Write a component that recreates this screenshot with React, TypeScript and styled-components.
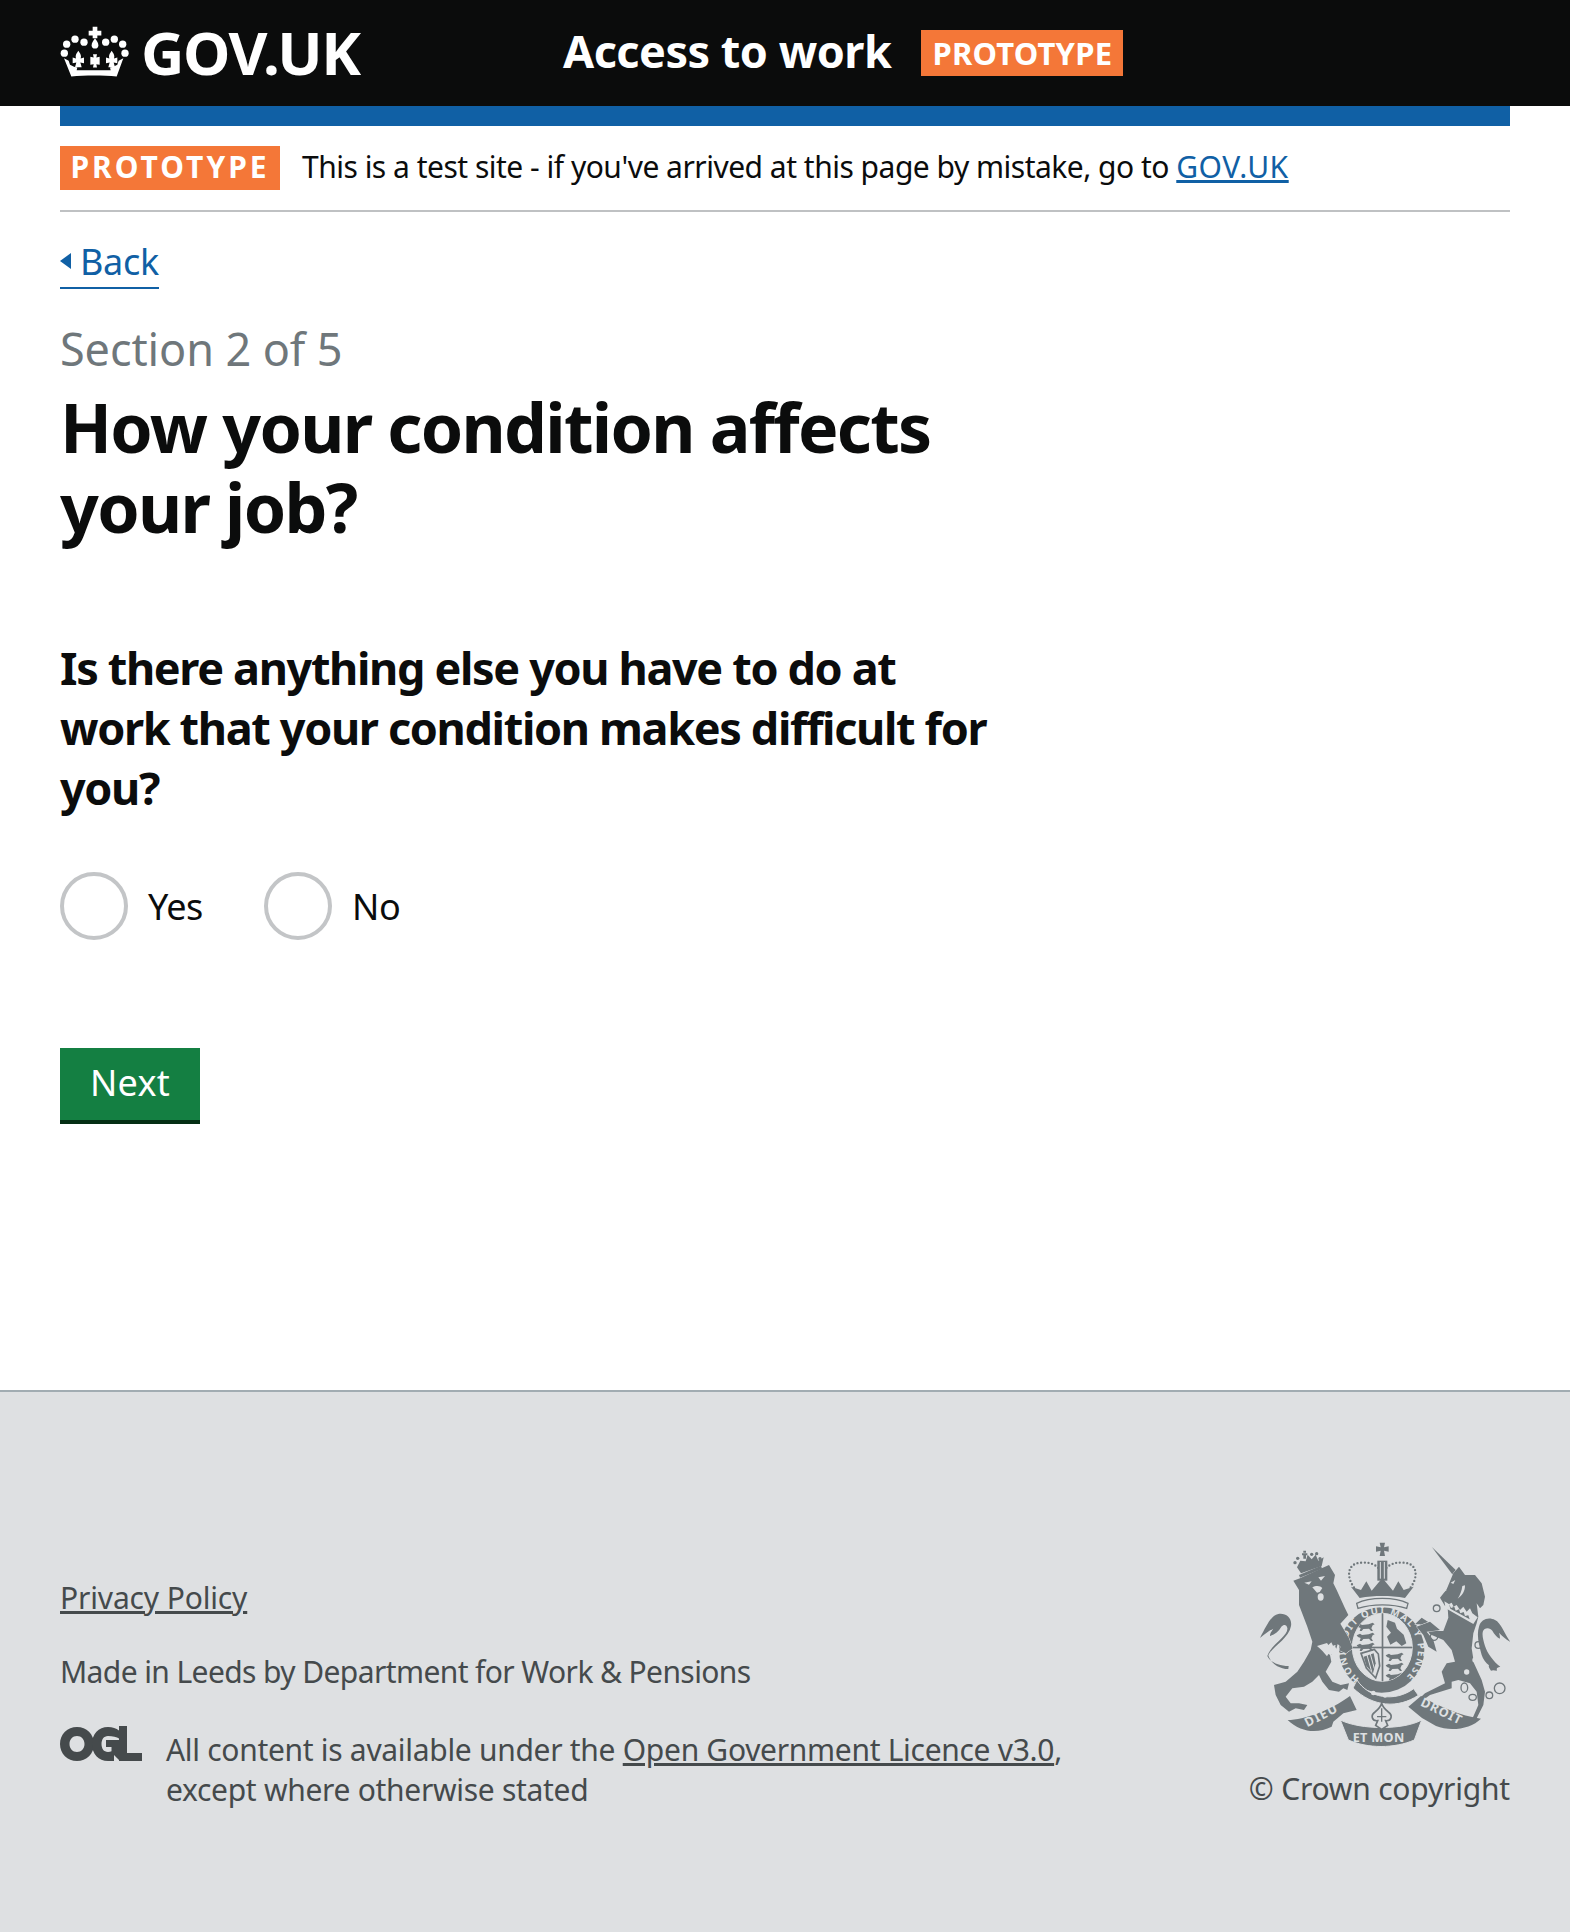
import { FC } from 'react'
import styled, { createGlobalStyle } from 'styled-components'

const GlobalStyle = createGlobalStyle`
  html, body {
    margin: 0;
    padding: 0;
    background: #fff;
    color: #0b0c0c;
    font-family: "Noto Sans", "Liberation Sans", sans-serif;
  }
`

const Page = styled.div`
  width: 1570px;
  height: 1932px;
  display: flex;
  flex-direction: column;
  overflow: hidden;
`

const Header = styled.header`
  height: 106px;
  flex: none;
  background: #0b0c0c;
  color: #fff;
  padding: 0 60px;
  display: flex;
  align-items: center;
  box-sizing: border-box;
`

const Logo = styled.div`
  width: 503px;
  display: flex;
  align-items: center;
  gap: 11px;
  font-size: 60px;
  font-weight: 700;
  line-height: 1;
  letter-spacing: -1.4px;
  padding-bottom: 2px;
`

const ServiceName = styled.div`
  font-size: 45px;
  font-weight: 700;
  letter-spacing: -0.5px;
  line-height: 1;
  padding-bottom: 6px;
`

const HeaderTag = styled.span`
  margin-left: 30px;
  background: #f47738;
  height: 46px;
  width: 202px;
  display: flex;
  align-items: center;
  justify-content: center;
  font-size: 31px;
  font-weight: 700;
  letter-spacing: 0.2px;
`

const Main = styled.main`
  flex: 1;
  padding: 0 60px;
`

const BlueBar = styled.div`
  height: 20px;
  background: #1060a5;
`

const PhaseBanner = styled.div`
  height: 86px;
  box-sizing: border-box;
  padding-top: 20px;
  border-bottom: 2px solid #bfc1c3;
  display: flex;
  align-items: flex-start;
  gap: 22px;
`

const PhaseTag = styled.span`
  width: 220px;
  height: 44px;
  background: #f47738;
  color: #fff;
  display: flex;
  align-items: center;
  justify-content: center;
  padding-bottom: 3px;
  box-sizing: border-box;
  font-size: 30px;
  font-weight: 700;
  letter-spacing: 3px;
`

const PhaseText = styled.span`
  font-size: 30px;
  line-height: 42px;
  letter-spacing: -0.5px;
`

const TextLink = styled.a`
  color: #1060a5;
  text-decoration: underline;
  letter-spacing: 0.5px;
`

const BackLink = styled.a`
  display: inline-flex;
  align-items: center;
  gap: 9px;
  margin-top: 28px;
  height: 49px;
  padding-bottom: 5px;
  box-sizing: border-box;
  color: #1060a5;
  font-size: 36px;
  letter-spacing: -0.3px;
  border-bottom: 2px solid #1060a5;
`

const BackArrow = styled.i`
  width: 0;
  height: 0;
  border-style: solid;
  border-width: 8px 11px 8px 0;
  border-color: transparent #1060a5 transparent transparent;
`

const Caption = styled.div`
  margin-top: 30px;
  color: #6f777b;
  font-size: 45px;
  line-height: 60px;
  letter-spacing: -0.1px;
`

const Title = styled.h1`
  margin: 8px 0 0;
  font-size: 68px;
  line-height: 80px;
  font-weight: 700;
  letter-spacing: -1.7px;
`

const Question = styled.h2`
  margin: 91px 0 0;
  font-size: 45px;
  line-height: 60px;
  font-weight: 700;
  letter-spacing: -1.35px;
`

const Options = styled.div`
  margin-top: 54px;
  display: flex;
  gap: 61px;
`

const Option = styled.label`
  display: flex;
  align-items: center;
  gap: 20px;
  font-size: 36px;
  letter-spacing: -0.4px;
`

const RadioCircle = styled.span`
  width: 68px;
  height: 68px;
  box-sizing: border-box;
  border: 4px solid #c3c5c7;
  border-radius: 50%;
  background: #fff;
`

const NextButton = styled.button`
  display: block;
  margin-top: 108px;
  width: 140px;
  height: 76px;
  padding: 0 0 4px;
  box-sizing: border-box;
  border: 0;
  border-bottom: 4px solid #052e14;
  background: #147f42;
  color: #fff;
  font-family: inherit;
  font-size: 36px;
  letter-spacing: 0.3px;
`

const Footer = styled.footer`
  height: 542px;
  flex: none;
  box-sizing: border-box;
  border-top: 2px solid #a1acb2;
  background: #dee0e2;
  color: #454a4c;
  padding: 150px 60px 0;
  display: flex;
  justify-content: space-between;
`

const FooterLeft = styled.div`
  padding-top: 36px;
  font-size: 30px;
`

const FooterLink = styled.a`
  color: #454a4c;
  text-decoration: underline;
`

const PrivacyRow = styled.div`
  line-height: 40px;
  letter-spacing: -0.15px;
`

const MadeIn = styled.div`
  margin-top: 34px;
  line-height: 40px;
  letter-spacing: -0.6px;
`

const Licence = styled.div`
  margin-top: 38px;
  display: flex;
  gap: 24px;
`

const LicenceText = styled.div`
  line-height: 40px;
  letter-spacing: -0.3px;
`

const OglMark = styled.svg`
  margin-top: -4px;
  flex: none;
`

const FooterRight = styled.div`
  display: flex;
  flex-direction: column;
  align-items: flex-end;
  font-size: 30px;
  letter-spacing: -0.2px;
`

const Copyright = styled.div`
  margin-top: 21px;
  line-height: 40px;
`

const Crown: FC = () => (
  <svg width="70" height="57" viewBox="60 40 210 170" fill="#fff">
    <circle cx="80" cy="100" r="11" />
    <circle cx="105" cy="85" r="11" />
    <circle cx="132" cy="94" r="11" />
    <circle cx="197" cy="94" r="11" />
    <circle cx="223" cy="85" r="11" />
    <circle cx="248" cy="100" r="11" />
    <circle cx="73" cy="127" r="11" />
    <circle cx="255" cy="127" r="11" />
    <path d="M158 48h14v12h12v14h-12v8h-14v-8h-12V60h12z" />
    <path d="M165 82c6 8 10 14 10 21a10 10 0 0 1-20 0c0-7 4-13 10-21z" />
    <path d="M159 130h12l-2 10 10-2v24l-10-2 2 10h-12l2-10-10 2v-24l10 2z" />
    <path d="M115 120c5 7 8 12 8 18l-1 5 10-3v17l-11-2 4 14h-20l4-14-11 2v-17l10 3-1-5c0-6 3-11 8-18z" />
    <path d="M215 120c5 7 8 12 8 18l-1 5 10-3v17l-11-2 4 14h-20l4-14-11 2v-17l10 3-1-5c0-6 3-11 8-18z" />
    <path d="M72 142l14 8 4 12 12 6 10 2-2 8h102l-2-8 10-2 12-6 4-12 14-8-20 55c-40-4-96-4-136 0z" />
  </svg>
)

const OglLogo: FC = () => (
  <OglMark width="82" height="36" viewBox="0 0 82 36" fill="#454a4c">
    <path fillRule="evenodd" d="M17 1C7.500 1 0 8.200 0 18s7.500 17 17 17 17-7.200 17-17S26.500 1 17 1zm0 9c4.400 0 7.500 3.500 7.500 8s-3.100 8-7.500 8-7.500-3.500-7.500-8 3.100-8 7.500-8z" />
    <path d="M48 1c4.600 0 8.200 1.200 11 3.500V0h8v27h15v8H59v-1l-5-5v6h-6c-9.500 0-16-7.200-16-17S38.500 1 48 1zm0 9c-4.300 0-6.500 3.600-6.500 8s2.200 8 6.500 8c1.300 0 2.500-.3 3.500-.8V21H46v-7h13v-1.500C57 11 52.500 10 48 10z" />
  </OglMark>
)

const INK = '#6f777b'
const PAPER = '#dee0e2'

const CoatOfArms: FC = () => (
  <svg width="250" height="206" viewBox="15 6 750 618" fill={INK}>
    <defs>
      <clipPath id="shield">
        <ellipse cx="382" cy="322" rx="90" ry="102" />
      </clipPath>
      <path id="passant" d="M0 8l10-5 6 4 20-2 12-5 6 5-6 3-4 9 5 8h-6l-6-7-17 1-5 6h-6l3-9-8-3z" />
    </defs>

    {/* crown */}
    <g fill="none" stroke={INK} strokeWidth="7" strokeLinecap="round" strokeDasharray="0 11">
      <path d="M297 142C272 108 278 68 320 68c24-2 42 6 52 18" />
      <path d="M467 142c25-34 19-74-23-74-24-2-42 6-52 18" />
    </g>
    <path d="M288 140l30 10 16-26 16 28 32-38 32 38 16-28 16 26 30-10-26 34c-46-8-90-8-136 0z" />
    <rect x="367" y="62" width="30" height="60" />
    <path d="M376 66v50M388 66v50" stroke={PAPER} strokeWidth="3" />
    <path d="M374 8h16l-3 14 14-3v16l-14-3 3 16h-16l3-16-14 3V19l14 3z" />
    <path d="M305 190c40-20 114-20 154 0l-4 15c-44-14-102-14-146 0z" fill={PAPER} stroke={INK} strokeWidth="4" />

    {/* garter and shield */}
    <circle cx="380" cy="330" r="128" />
    <path id="garterText" d="M313 416A109 109 0 1 1 447 416" fill="none" />
    <text fill={PAPER} fontFamily="'Noto Sans', sans-serif" fontWeight="700" fontSize="29">
      <textPath href="#garterText" textLength="530" lengthAdjust="spacing">HONI SOIT QUI MAL Y PENSE</textPath>
    </text>
    <ellipse cx="382" cy="322" rx="90" ry="102" fill={PAPER} stroke={PAPER} strokeWidth="3" />
    <g clipPath="url(#shield)">
      <use href="#passant" x="305" y="248" />
      <use href="#passant" x="305" y="278" />
      <use href="#passant" x="305" y="308" />
      <path d="M398 240l22 8 6 18 20 18 8 26-14 8-16-14-18 10-10-24 12-12-14-18z" />
      <path d="M318 340l40-12 12 14 4 36-12 36-28-30z" fill="none" stroke={INK} strokeWidth="5" />
      <path d="M326 350l30-10 6 30-8 30-20-22z" />
      <path d="M336 345l14 50M346 342l12 44" stroke={PAPER} strokeWidth="3" />
      <use href="#passant" x="392" y="338" />
      <use href="#passant" x="392" y="368" />
      <use href="#passant" x="392" y="398" />
      <rect x="380" y="215" width="5" height="215" />
      <rect x="285" y="320" width="195" height="5" />
    </g>
    <path d="M306 420c34 54 112 68 170 26l14 20c-60 40-136 36-196-22z" stroke={PAPER} strokeWidth="3" />
    <circle cx="355" cy="459" r="7" fill={PAPER} />
    <circle cx="390" cy="467" r="6" fill={PAPER} />

    {/* lion */}
    <g stroke={PAPER} strokeWidth="3" paintOrder="stroke">
      <path d="M115 122l20-7 65-30 22-10 18 30-5 25 10 20 25 55 10 20-24 26 25 42 12 32-20 15-20-9 4-11-9-8-4 14-6-10-7 10-1 17-5 2 4 20-17 30 20 30 25 10 25-5-5 20-12-5-13 10-30-5-20-25-10-20-20 20-25 15-35 5-20 25 15 20 25 0 25 5-10 15-25-5-20 10-25-20-15-30-5-30 35-10 35-30 20-30 20-35 5-25-15-45-25-65v-45z" />
    </g>
    <path d="M232 250l38 50" stroke={INK} strokeWidth="3" />
    <path d="M186 318l30-9 4 6 9-8 5 10 8-2-3 12 6 6-5 8-6-3-7 8-7-4-4 7c-8-10-18-22-30-31z" fill={PAPER} />
    <path d="M148 128l22-4-8 10zM190 112l20-4-12 14z" fill={PAPER} />
    <path d="M172 142c10-6 24-6 30 2l-8 12-8 2z" fill={PAPER} />
    <ellipse cx="197" cy="171" rx="9" ry="11" fill={PAPER} />
    <path d="M100 387C70 387 45 366 40 346c10-25 62-50 68-88 4-24-16-40-38-36-22 4-36 36-55 72 18-14 28-22 40-28-6 8-10 14-10 22 16-6 26-14 34-28 8-8 16-6 18 4 4 24-50 50-60 84 8 18 34 30 64 30z" />

    {/* lion crown */}
    <path d="M126 82l12 18 62-22 6-26-16 10-8-18-12 14-12-14-6 20-16-2z" />
    <path d="M132 105l66-28 3 9-66 27z" />
    <g>
      <circle cx="120" cy="68" r="5" />
      <circle cx="128" cy="55" r="5" />
      <circle cx="170" cy="43" r="5" />
      <circle cx="185" cy="41" r="5" />
      <circle cx="195" cy="56" r="5" />
      <path d="M145 38h8v-6h-8zm-4 8h16v-6h-16zm4 10h8V46h-8z" />
    </g>

    {/* unicorn */}
    <g transform="translate(390 0)">
      <path d="M140 20l76 74-12 12z" />
      <g stroke={PAPER} strokeWidth="3" paintOrder="stroke">
        <path d="M205 100l17-20 18 25 30 0 20 25 10 40-5 25-10 10-10-15 5 40-5 20-10 30-5 45 7 45 23 50 10 35-5 40-20 40-20 15 12-25 13-30-5-40-20-25-35-10-20 5 0 20-65 20-25 18h-15l25-23 60-30-10-35 15-25 25-5-10-35-25-30-40-17-10-15-20-15h-15l20-20 30 20 20 20h15l15-40-2-30 17-5-5-10-20 10-15-25 20-25z" />
        <path d="M165 270l-40 5 20 25 10 35-25-15-15-35-20-25 40-15z" />
      </g>
      <path d="M178 184l4 21 83 47 13-20-16-12-7-15-10 10-10-15-10 10-10-15-10 5z" fill={PAPER} />
      <path d="M192 192l6 12 10-4 4 12 10-4 4 12 10-4 4 12 10-2 4 12-58-32z" />
      <path d="M197 128l14-8-6 12zM168 152l18-2-10 6zM240 136c0 18-8 30-22 40 8-12 12-24 14-38z" fill={PAPER} />
      <circle cx="270" cy="360" r="8" fill={PAPER} />
      <circle cx="245" cy="396" r="8" fill={PAPER} />
      <path d="M290 345c-8-30-16-60-8-85 6-24 30-30 48-20 18 8 30 44 46 66-14-10-24-16-34-28 2 8 4 14 2 18-10-6-16-14-22-24-6-8-16-10-24-4-10 8-4 30 2 50 6 20 26 48 46 62-10 2-12 4-10 12-10-2-14-2-18 0-6-8-8-12-6-16-10-8-18-18-22-31z" />
      <g fill="none" stroke={INK} strokeWidth="4">
        <circle cx="155" cy="205" r="10" />
        <circle cx="147" cy="290" r="11" />
        <circle cx="280" cy="315" r="10" />
        <ellipse cx="238" cy="443" rx="10" ry="14" />
        <ellipse cx="263" cy="472" rx="11" ry="9" />
        <circle cx="313" cy="466" r="10" />
        <circle cx="344" cy="445" r="16" />
      </g>
    </g>

    {/* motto */}
    <path d="M98 540c50 0 130-30 187-72l20 42-40 10-30 25-5 15c-40 20-90 20-132-20z" />
    <path d="M460 500l38-32c50 30 120 60 180 68-30 30-90 40-135 22l-42-24z" />
    <path d="M256 540c60 30 190 30 244 0l-22 60c-60 26-140 26-198 0z" stroke={PAPER} strokeWidth="3" />
    <path d="M380 490c-4 14-12 20-20 26-14 10-10 28 8 26l-6 14 18 12 18-12-6-14c18 2 22-16 8-26-8-6-16-12-20-26z" fill={PAPER} stroke={INK} strokeWidth="5" />
    <path d="M380 505v40M366 530h28" stroke={INK} strokeWidth="4" />
    <g fill={PAPER} fontFamily="'Noto Sans', sans-serif" fontWeight="700" fontSize="38">
      <text x="157" y="562" transform="rotate(-27 157 562)" letterSpacing="4">DIEU</text>
      <text x="494" y="496" transform="rotate(26 494 496)" letterSpacing="3">DROIT</text>
      <text x="293" y="606" letterSpacing="1">ET MON</text>
    </g>
  </svg>
)

const App: FC = () => (
  <Page>
    <GlobalStyle />
    <Header>
      <Logo>
        <Crown />
        GOV.UK
      </Logo>
      <ServiceName>Access to work</ServiceName>
      <HeaderTag>PROTOTYPE</HeaderTag>
    </Header>
    <Main>
      <BlueBar />
      <PhaseBanner>
        <PhaseTag>PROTOTYPE</PhaseTag>
        <PhaseText>
          This is a test site - if you've arrived at this page by mistake, go to <TextLink>GOV.UK</TextLink>
        </PhaseText>
      </PhaseBanner>
      <BackLink>
        <BackArrow />
        Back
      </BackLink>
      <Caption>Section 2 of 5</Caption>
      <Title>
        How your condition affects
        <br />
        your job?
      </Title>
      <Question>
        Is there anything else you have to do at
        <br />
        work that your condition makes difficult for
        <br />
        you?
      </Question>
      <Options>
        <Option>
          <RadioCircle />
          Yes
        </Option>
        <Option>
          <RadioCircle />
          No
        </Option>
      </Options>
      <NextButton>Next</NextButton>
    </Main>
    <Footer>
      <FooterLeft>
        <PrivacyRow>
          <FooterLink>Privacy Policy</FooterLink>
        </PrivacyRow>
        <MadeIn>Made in Leeds by Department for Work &amp; Pensions</MadeIn>
        <Licence>
          <OglLogo />
          <LicenceText>
            All content is available under the <FooterLink>Open Government Licence v3.0</FooterLink>,
            <br />
            except where otherwise stated
          </LicenceText>
        </Licence>
      </FooterLeft>
      <FooterRight>
        <CoatOfArms />
        <Copyright>© Crown copyright</Copyright>
      </FooterRight>
    </Footer>
  </Page>
)

export default App
